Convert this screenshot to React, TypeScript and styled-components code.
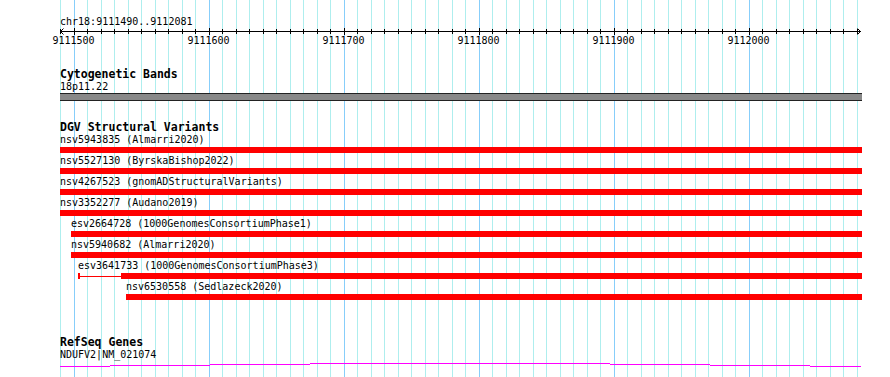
import React from "react";
import styled, { createGlobalStyle } from "styled-components";

// 表示範囲
const VIEW_START = 9111490;
const VIEW_END = 9112081;
const PX_PER_BP = 1.35;
const VIEW_LEFT = 60;
const VIEW_WIDTH = 802;

const toPx = (bp: number) => Math.floor(Math.max(0, (bp - VIEW_START) * PX_PER_BP + 0.7));

type Variant = {
    name: string;
    source: string;
    start: number;
    // 太い部分の開始位置（細線＋キャップ付きのもの）
    thickStart?: number;
};

const variants: Variant[] = [
    { name: "nsv5943835", source: "Almarri2020", start: 9111400 },
    { name: "nsv5527130", source: "ByrskaBishop2022", start: 9111350 },
    { name: "nsv4267523", source: "gnomADStructuralVariants", start: 9111420 },
    { name: "nsv3352277", source: "Audano2019", start: 9111300 },
    { name: "esv2664728", source: "1000GenomesConsortiumPhase1", start: 9111498 },
    { name: "nsv5940682", source: "Almarri2020", start: 9111498 },
    { name: "esv3641733", source: "1000GenomesConsortiumPhase3", start: 9111503, thickStart: 9111535 },
    { name: "nsv6530558", source: "Sedlazeck2020", start: 9111539 },
];

// 遺伝子ラインの段差（x始点, x終点, 行）
const geneSegments: [number, number, number][] = [
    [0, 50, 5],
    [50, 150, 4],
    [150, 250, 3],
    [250, 550, 2],
    [550, 650, 3],
    [650, 750, 4],
    [750, 801, 5],
];

const gridBps: number[] = [];
for (let bp = VIEW_START; bp <= VIEW_END; bp += 10) gridBps.push(bp);

const GlobalStyle = createGlobalStyle`
    html, body {
        margin: 0;
        padding: 0;
        background: #ffffff;
    }
    body {
        font-family: "DejaVu Sans Mono", "Liberation Mono", monospace;
        color: #000000;
    }
`;

const Ruler = () => (
    <RulerSvg width={VIEW_WIDTH} height={20}>
        <rect x={0} y={3} width={801} height={1} fill="#000" />
        {gridBps.map(bp => {
            const x = toPx(bp);
            const major = bp % 100 === 0;
            return (
                <g key={bp}>
                    <rect x={x} y={major ? 0 : 1} width={1} height={major ? 7 : 5} fill="#000" />
                    {major && (
                        <text x={x - 0.5} y={15.7} textAnchor="middle" fontSize={10} fontFamily='"DejaVu Sans Mono", monospace'>
                            {bp}
                        </text>
                    )}
                </g>
            );
        })}
        <polyline points="3.5,0.5 0.5,3.5 3.5,6.5" fill="none" stroke="#000" strokeWidth={1} />
        <polyline points="797.5,0.5 800.5,3.5 797.5,6.5" fill="none" stroke="#000" strokeWidth={1} />
    </RulerSvg>
);

const VariantRow = ({ v }: { v: Variant }) => {
    const left = toPx(v.start);
    const thick = v.thickStart !== undefined ? toPx(v.thickStart) : left;
    return (
        <Row style={{ paddingLeft: left }}>
            <FeatureLabel>{v.name} ({v.source})</FeatureLabel>
            <Bar>
                {v.thickStart !== undefined && (
                    <>
                        <Cap />
                        <Connector style={{ width: thick - left - 2 }} />
                    </>
                )}
                <Thick />
            </Bar>
        </Row>
    );
};

const App = () => (
    <>
        <GlobalStyle />
        <Frame>
            <GridLayer>
                {gridBps.map(bp => (
                    <GridLine key={bp} $major={bp % 100 === 0} style={{ left: VIEW_LEFT + toPx(bp) }} />
                ))}
            </GridLayer>
            <Column>
                <Location>chr18:{VIEW_START}..{VIEW_END}</Location>
                <Ruler />

                <TrackTitle $gap={20}>Cytogenetic Bands</TrackTitle>
                <FeatureLabel>18p11.22</FeatureLabel>
                <Band />

                <TrackTitle $gap={20}>DGV Structural Variants</TrackTitle>
                {variants.map(v => <VariantRow key={v.name + v.source} v={v} />)}

                <TrackTitle $gap={34}>RefSeq Genes</TrackTitle>
                <FeatureLabel>NDUFV2|NM_021074</FeatureLabel>
                <GeneSvg width={VIEW_WIDTH} height={8}>
                    {geneSegments.map(([x1, x2, y]) => (
                        <rect key={x1} x={x1} y={y} width={x2 - x1} height={1} fill="#ff00ff" />
                    ))}
                </GeneSvg>
            </Column>
        </Frame>
    </>
);

export default App;

// 画面全体
const Frame = styled.div`
    position: relative;
    width: 890px;
    height: 377px;
    overflow: hidden;
    background: #ffffff;
`;

// グリッド線
const GridLayer = styled.div`
    position: absolute;
    inset: 0;
    pointer-events: none;
`;

const GridLine = styled.div<{ $major: boolean }>`
    position: absolute;
    top: 0;
    bottom: 0;
    width: 1px;
    background: ${p => (p.$major ? "#87cefa" : "#aeeeee")};
`;

// トラック列
const Column = styled.div`
    position: relative;
    z-index: 1;
    margin-left: ${VIEW_LEFT}px;
    width: ${VIEW_WIDTH}px;
    display: flex;
    flex-direction: column;
`;

const Location = styled.div`
    margin-top: 16px;
    font-size: 10px;
    line-height: 12px;
    height: 12px;
    white-space: nowrap;
`;

const RulerSvg = styled.svg`
    display: block;
    overflow: visible;
`;

const TrackTitle = styled.div<{ $gap: number }>`
    margin-top: ${p => p.$gap}px;
    font-size: 11.5px;
    font-weight: bold;
    line-height: 13px;
    height: 13px;
    white-space: nowrap;
`;

const FeatureLabel = styled.div`
    font-size: 10px;
    line-height: 12px;
    height: 12px;
    white-space: nowrap;
`;

const Band = styled.div`
    height: 6px;
    background: #888888;
    border-top: 1px solid #222222;
    border-bottom: 1px solid #222222;
`;

// 構造多型の行
const Row = styled.div`
    display: flex;
    flex-direction: column;
    height: 21px;
`;

const Bar = styled.div`
    margin-top: 1px;
    height: 6px;
    display: flex;
    align-items: center;
`;

const Cap = styled.div`
    width: 2px;
    height: 6px;
    background: #ff0000;
`;

const Connector = styled.div`
    height: 1px;
    background: #ff0000;
`;

const Thick = styled.div`
    flex: 1;
    height: 6px;
    background: #ff0000;
`;

const GeneSvg = styled.svg`
    display: block;
`;
